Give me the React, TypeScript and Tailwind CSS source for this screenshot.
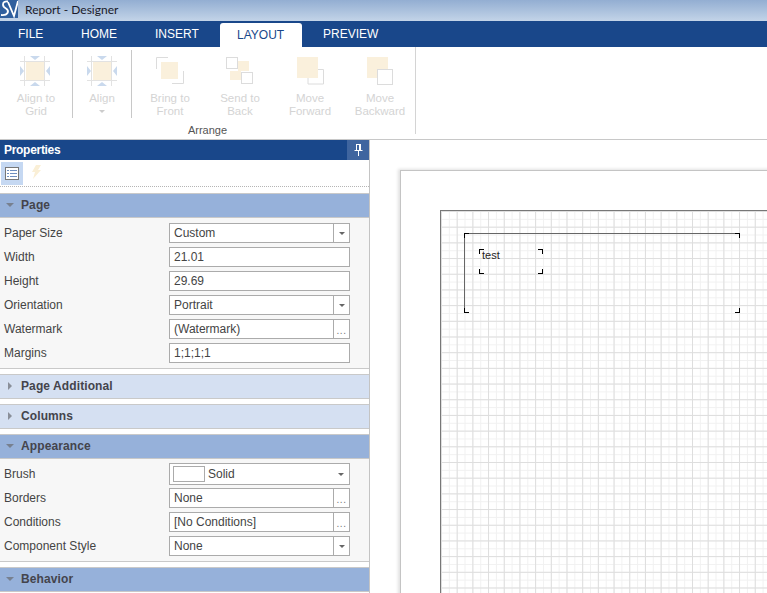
const font = { fontFamily: '"Liberation Sans", Arial, sans-serif' }

function Logo() {
  return (
    <svg width="18" height="18" viewBox="0 0 18 18" className="shrink-0">
      <rect width="18" height="18" fill="#2f5f9e" />
      <path d="M8 1.500 Q3 1 3 4.500 Q3 7 6 8.500 Q9 10.500 7.500 13 Q6 15.500 1 15" fill="none" stroke="#fff" strokeWidth="1.800" />
      <path d="M8 2 L14 16 L18 1" fill="none" stroke="#fff" strokeWidth="1.800" />
    </svg>
  )
}

function AlignIcon({ cx }: { cx: number }) {
  return (
    <svg width="72" height="40" viewBox="0 0 72 40" className="block">
      <path d={`M${cx - 10.5} 6V36M${cx + 9.5} 6V36M${cx - 15} 11.500H${cx + 15}M${cx - 15} 30.500H${cx + 15}`} stroke="#e2e2e2" />
      <rect x={cx - 9} y="12" width="18" height="18" fill="#faf0dc" />
      <path d={`M${cx - 5} 6h10l-5 4zM${cx - 5} 36h10l-5 -4zM${cx - 15} 16v10l4 -5zM${cx + 15} 16v10l-4 -5z`} fill="#c9d9ed" />
    </svg>
  )
}

function BringIcon() {
  return (
    <svg width="70" height="40" viewBox="0 0 70 40" className="block">
      <path d="M21.500 19V7.500H33" fill="none" stroke="#dcdcdc" />
      <path d="M48.500 21V33.500H37" fill="none" stroke="#dcdcdc" />
      <rect x="26" y="12" width="17" height="17" fill="#faf0dc" />
    </svg>
  )
}

function SendIcon() {
  return (
    <svg width="70" height="40" viewBox="0 0 70 40" className="block">
      <rect x="33" y="11" width="11" height="10" fill="#faf0dc" />
      <rect x="25" y="21" width="11" height="9" fill="#faf0dc" />
      <rect x="21.500" y="7.500" width="11" height="11" fill="none" stroke="#dcdcdc" />
      <rect x="36.500" y="22.500" width="11" height="11" fill="none" stroke="#dcdcdc" />
    </svg>
  )
}

function ForwardIcon() {
  return (
    <svg width="70" height="40" viewBox="0 0 70 40" className="block">
      <rect x="22" y="7" width="21" height="21" fill="#faf0dc" />
      <path d="M43 19.500H48.500V34H33V28" fill="none" stroke="#dcdcdc" />
    </svg>
  )
}

function BackwardIcon() {
  return (
    <svg width="70" height="40" viewBox="0 0 70 40" className="block">
      <rect x="22" y="7" width="21" height="21" fill="#faf0dc" />
      <rect x="32.500" y="19.500" width="15" height="15" fill="#fff" stroke="#dcdcdc" />
    </svg>
  )
}

function RibbonItem({ icon, label, width }: { icon: React.ReactNode; label: string[]; width: string }) {
  return (
    <div className={`${width} flex flex-col items-center text-[11.500px] leading-[13px] text-[#d4d4d4]`}>
      {icon}
      <div className="mt-[2px] text-center">
        {label.map(l => <div key={l}>{l}</div>)}
      </div>
    </div>
  )
}

function Caret() {
  return <span className="block w-0 h-0 border-x-[3px] border-x-transparent border-t-[3px] border-t-[#666]" />
}

function Field({ value, end }: { value: string; end?: 'arrow' | 'dots' }) {
  return (
    <div className="w-[181px] h-[20px] flex items-center bg-white border border-[#ababab] text-[12px] text-[#444]">
      <span className="flex-1 pl-[4px] truncate">{value}</span>
      {end && (
        <span className="w-[16px] h-full border-l border-[#ababab] flex items-center justify-center shrink-0">
          {end === 'arrow' ? <Caret /> : <span className="text-[10px] leading-none text-[#777] tracking-[0.5px] pt-[3px]">...</span>}
        </span>
      )}
    </div>
  )
}

function Row({ label, children }: { label: string; children: React.ReactNode }) {
  return (
    <div className="flex items-center h-[20px] mb-[4px] pl-[4px]">
      <span className="w-[165px] text-[12px] text-[#444]">{label}</span>
      {children}
    </div>
  )
}

function SectionHead({ title, open }: { title: string; open: boolean }) {
  return (
    <div className={`h-[25px] flex items-center border-y border-[#c9c9c9] pb-[2px] text-[12px] font-bold text-[#44444c] ${open ? 'bg-[#96b1da]' : 'bg-[#d5e0f2]'}`}>
      <span className="w-[21px] flex justify-center pr-[1px]">
        {open
          ? <span className="block w-0 h-0 border-x-[4px] border-x-transparent border-t-[4px] border-t-[#77808f]" />
          : <span className="block w-0 h-0 border-y-[4px] border-y-transparent border-l-[4px] border-l-[#8a8f99]" />}
      </span>
      <span className="tracking-[0.1px]">{title}</span>
    </div>
  )
}

function Corner({ pos }: { pos: string }) {
  return <span className={`absolute w-[5px] h-[5px] border-black ${pos}`} />
}

export default function App() {
  return (
    <div style={font} className="w-[767px] h-[593px] overflow-hidden flex flex-col bg-white">
      {/* title bar */}
      <div className="h-[21px] flex items-start bg-gradient-to-b from-[#93aed2] to-[#c3d4e8]">
        <Logo />
        <span className="ml-[7px] mt-[2px] text-[12px] leading-[16px] text-[#1a1a2a]" style={{ fontFamily: 'Lato, sans-serif' }}>Report - Designer</span>
      </div>

      {/* tabs */}
      <div className="h-[26px] flex items-end bg-[#19478a] text-[12px] text-white">
        <span className="w-[81px] pl-[18px] h-[26px] leading-[27px]">FILE</span>
        <span className="w-[74px] h-[26px] leading-[27px]">HOME</span>
        <span className="w-[65px] h-[26px] leading-[27px]">INSERT</span>
        <span className="w-[82px] h-[24px] leading-[25px] pl-[17px] bg-white text-[#19478a] rounded-t-[3px]">LAYOUT</span>
        <span className="ml-[21px] h-[26px] leading-[27px]">PREVIEW</span>
      </div>

      {/* ribbon */}
      <div className="h-[93px] flex border-b border-[#c8c8c8] shrink-0">
        <div className="w-[416px] flex flex-col border-r border-[#d4d4d4] mb-[5px]">
          <div className="flex h-[73px] pt-[3px]">
            <RibbonItem width="w-[73px] border-r border-[#c8c8c8]" icon={<AlignIcon cx={35} />} label={['Align to', 'Grid']} />
            <div className="w-[59px] border-r border-[#c8c8c8] flex flex-col items-center text-[11.500px] leading-[13px] text-[#d4d4d4]">
              <div className="w-[58px] overflow-hidden"><AlignIcon cx={29} /></div>
              <div className="mt-[2px]">Align</div>
              <span className="block mt-[5px] w-0 h-0 border-x-[3px] border-x-transparent border-t-[3px] border-t-[#ccc]" />
            </div>
            <RibbonItem width="w-[70px] ml-[3px]" icon={<BringIcon />} label={['Bring to', 'Front']} />
            <RibbonItem width="w-[70px]" icon={<SendIcon />} label={['Send to', 'Back']} />
            <RibbonItem width="w-[70px]" icon={<ForwardIcon />} label={['Move', 'Forward']} />
            <RibbonItem width="w-[70px]" icon={<BackwardIcon />} label={['Move', 'Backward']} />
          </div>
          <div className="text-center text-[11px] leading-[13px] mt-[3px] pt-[3px] text-[#555]">Arrange</div>
        </div>
      </div>

      <div className="flex-1 flex min-h-0">
        {/* properties panel */}
        <div className="w-[370px] shrink-0 border-r border-[#c4c4c4] overflow-hidden">
          <div className="h-[20px] flex items-center justify-between bg-[#19478a] text-[12px] font-bold text-white pl-[4px]">
            <span className="tracking-[-0.3px]">Properties</span>
            <span className="w-[22px] h-[20px] bg-[#3f659f] flex items-center justify-center">
              <svg width="9" height="12" viewBox="0 0 9 12">
                <path d="M2 0.500h5M2.500 1v5M6.500 1v5M0.500 6.500h8M4.500 7v5" stroke="#fff" fill="none" />
                <path d="M5 1h1.500v5H5z" fill="#fff" />
              </svg>
            </span>
          </div>
          <div className="h-[27px] flex pl-[1px] pt-[2px] border-b border-dotted border-[#b5b5b5]">
            <span className="w-[22px] h-[23px] bg-[#c5d8f2] flex items-center justify-center">
              <svg width="14" height="13" viewBox="0 0 14 13">
                <rect x="0.500" y="0.500" width="13" height="12" fill="#fff" stroke="#777" />
                <path d="M2 3.500h2M5 3.500h7M2 6.500h2M5 6.500h7M2 9.500h2M5 9.500h7" stroke="#6f8fc0" />
              </svg>
            </span>
            <svg width="11" height="14" viewBox="0 0 11 14" className="ml-[8px] mt-[3px]">
              <path d="M5 0h5L7 5h3L2 14l2-7H1z" fill="#faefd6" />
            </svg>
          </div>
          <div className="h-[6px]" />
          <SectionHead title="Page" open />
          <div className="bg-[#f7f7f7] pt-[5px] pb-[1px] border-b border-[#c9c9c9]">
            <Row label="Paper Size"><Field value="Custom" end="arrow" /></Row>
            <Row label="Width"><Field value="21.01" /></Row>
            <Row label="Height"><Field value="29.69" /></Row>
            <Row label="Orientation"><Field value="Portrait" end="arrow" /></Row>
            <Row label="Watermark"><Field value="(Watermark)" end="dots" /></Row>
            <Row label="Margins"><Field value="1;1;1;1" /></Row>
          </div>
          <div className="mt-[5px]"><SectionHead title="Page Additional" open={false} /></div>
          <div className="mt-[5px]"><SectionHead title="Columns" open={false} /></div>
          <div className="mt-[5px]">
            <SectionHead title="Appearance" open />
            <div className="bg-[#f7f7f7] pt-[4px] pb-[1px] border-b border-[#c9c9c9]">
              <div className="flex items-center h-[22px] mb-[3px] pl-[4px]">
                <span className="w-[165px] text-[12px] text-[#444]">Brush</span>
                <div className="w-[181px] h-[22px] flex items-center bg-white border border-[#ababab] text-[12px] text-[#444] pl-[3px]">
                  <span className="w-[32px] h-[16px] border border-[#ababab] bg-white mr-[3px]" />
                  <span className="flex-1">Solid</span>
                  <span className="w-[16px] flex justify-center"><Caret /></span>
                </div>
              </div>
              <Row label="Borders"><Field value="None" end="dots" /></Row>
              <Row label="Conditions"><Field value="[No Conditions]" end="dots" /></Row>
              <Row label="Component Style"><Field value="None" end="arrow" /></Row>
            </div>
          </div>
          <div className="mt-[5px]"><SectionHead title="Behavior" open /></div>
        </div>

        {/* design surface */}
        <div className="flex-1 min-w-0 overflow-hidden pl-[30px] pt-[30px]">
          <div className="w-[500px] h-[500px] bg-white border-l border-t border-[#c4c4c4] shadow-[-2px_-1px_3px_rgba(0,0,0,0.12)] pl-[39px] pt-[39px]">
            <div className="relative w-[460px] h-[460px] border-l border-t border-[#777] [background-image:linear-gradient(to_right,#dedede_1px,transparent_1px),linear-gradient(to_bottom,#dedede_1px,transparent_1px),linear-gradient(to_right,#f1f1f1_1px,transparent_1px),linear-gradient(to_bottom,#f1f1f1_1px,transparent_1px)] [background-size:15.700px_15.700px,15.700px_15.700px,7.850px_7.850px,7.850px_7.850px]">
              {/* band */}
              <div className="absolute left-[23px] top-[22px] w-[276px] h-[80px] border-l border-t border-[#666]">
                <Corner pos="-left-[1px] -top-[1px] border-l border-t" />
                <Corner pos="-right-[0px] -top-[1px] border-r border-t" />
                <Corner pos="-left-[1px] bottom-0 border-l border-b" />
                <Corner pos="right-0 bottom-0 border-r border-b" />
                {/* text component */}
                <div className="absolute left-[14px] top-[15px] w-[64px] h-[25px]">
                  <Corner pos="left-0 top-0 border-l border-t" />
                  <Corner pos="right-0 top-0 border-r border-t" />
                  <Corner pos="left-0 bottom-0 border-l border-b" />
                  <Corner pos="right-0 bottom-0 border-r border-b" />
                  <span className="absolute left-[3px] -top-[1px] text-[11px] leading-[14px] text-[#222]">test</span>
                </div>
              </div>
            </div>
          </div>
        </div>
      </div>
    </div>
  )
}
